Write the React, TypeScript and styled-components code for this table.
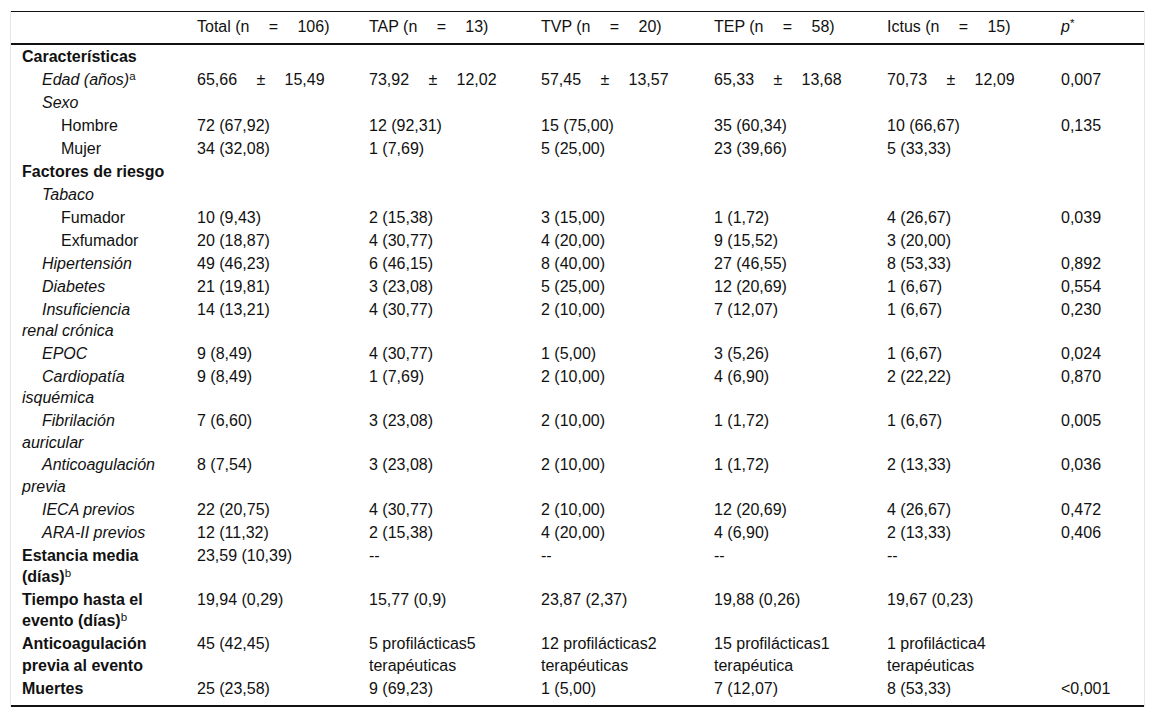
import React from 'react';
import styled, { createGlobalStyle } from 'styled-components';

const GlobalStyle = createGlobalStyle`
  html, body {
    margin: 0;
    padding: 0;
    background: #fff;
  }
  body {
    font-family: 'Liberation Sans', Arial, sans-serif;
    color: #111;
  }
`;

const Frame = styled.div`
  margin: 11px 0 0 10px;
  width: 1133px;
  border-left: 1px solid #e6e6e6;
  border-right: 1px solid #e6e6e6;
`;

const Table = styled.table`
  width: 1133px;
  border-collapse: collapse;
  table-layout: fixed;
  font-size: 16px;
  line-height: 21.3px;
  border-top: 1px solid #111;
  border-bottom: 2px solid #111;
`;

const HeadCell = styled.th`
  text-align: left;
  font-weight: 400;
  padding: 4.35px 10px 5.35px;
  border-bottom: 2px solid #111;
  white-space: nowrap;
`;

const LabelCell = styled.td<{ $level: number; $bold?: boolean; $italic?: boolean; $last?: boolean }>`
  vertical-align: top;
  padding: 0.85px 20px ${({ $last }) => ($last ? '5.7px' : '0.85px')} 11px;
  text-indent: ${({ $level }) => ($level === 2 ? 39 : $level * 20)}px;
  font-weight: ${({ $bold }) => ($bold ? 700 : 400)};
  font-style: ${({ $italic }) => ($italic ? 'italic' : 'normal')};
`;

const DataCell = styled.td<{ $last?: boolean }>`
  vertical-align: top;
  padding: 0.85px 10px ${({ $last }) => ($last ? '5.7px' : '0.85px')};
`;

const Sep = styled.span`
  margin: 0 0.93em;
`;

const Sup = styled.sup`
  font-size: 0.72em;
  line-height: 0;
  vertical-align: baseline;
  position: relative;
  top: -0.45em;
  font-style: normal;
  font-weight: 400;
`;

const Em = styled.span`
  font-style: italic;
`;

type Row = {
  label: React.ReactNode;
  level: number;
  bold?: boolean;
  italic?: boolean;
  cells?: React.ReactNode[];
};

const pm = (a: string, b: string) => (
  <>
    {a} <Sep>±</Sep> {b}
  </>
);

const n = (label: string, v: string) => (
  <>
    {label} (n <Sep>=</Sep> {v})
  </>
);

const rows: Row[] = [
  { label: 'Características', level: 0, bold: true },
  {
    label: <>Edad (años)<Sup>a</Sup></>,
    level: 1,
    italic: true,
    cells: [pm('65,66', '15,49'), pm('73,92', '12,02'), pm('57,45', '13,57'), pm('65,33', '13,68'), pm('70,73', '12,09'), '0,007'],
  },
  { label: 'Sexo', level: 1, italic: true },
  { label: 'Hombre', level: 2, cells: ['72 (67,92)', '12 (92,31)', '15 (75,00)', '35 (60,34)', '10 (66,67)', '0,135'] },
  { label: 'Mujer', level: 2, cells: ['34 (32,08)', '1 (7,69)', '5 (25,00)', '23 (39,66)', '5 (33,33)', ''] },
  { label: 'Factores de riesgo', level: 0, bold: true },
  { label: 'Tabaco', level: 1, italic: true },
  { label: 'Fumador', level: 2, cells: ['10 (9,43)', '2 (15,38)', '3 (15,00)', '1 (1,72)', '4 (26,67)', '0,039'] },
  { label: 'Exfumador', level: 2, cells: ['20 (18,87)', '4 (30,77)', '4 (20,00)', '9 (15,52)', '3 (20,00)', ''] },
  { label: 'Hipertensión', level: 1, italic: true, cells: ['49 (46,23)', '6 (46,15)', '8 (40,00)', '27 (46,55)', '8 (53,33)', '0,892'] },
  { label: 'Diabetes', level: 1, italic: true, cells: ['21 (19,81)', '3 (23,08)', '5 (25,00)', '12 (20,69)', '1 (6,67)', '0,554'] },
  { label: 'Insuficiencia renal crónica', level: 1, italic: true, cells: ['14 (13,21)', '4 (30,77)', '2 (10,00)', '7 (12,07)', '1 (6,67)', '0,230'] },
  { label: 'EPOC', level: 1, italic: true, cells: ['9 (8,49)', '4 (30,77)', '1 (5,00)', '3 (5,26)', '1 (6,67)', '0,024'] },
  { label: 'Cardiopatía isquémica', level: 1, italic: true, cells: ['9 (8,49)', '1 (7,69)', '2 (10,00)', '4 (6,90)', '2 (22,22)', '0,870'] },
  { label: 'Fibrilación auricular', level: 1, italic: true, cells: ['7 (6,60)', '3 (23,08)', '2 (10,00)', '1 (1,72)', '1 (6,67)', '0,005'] },
  { label: 'Anticoagulación previa', level: 1, italic: true, cells: ['8 (7,54)', '3 (23,08)', '2 (10,00)', '1 (1,72)', '2 (13,33)', '0,036'] },
  { label: 'IECA previos', level: 1, italic: true, cells: ['22 (20,75)', '4 (30,77)', '2 (10,00)', '12 (20,69)', '4 (26,67)', '0,472'] },
  { label: 'ARA-II previos', level: 1, italic: true, cells: ['12 (11,32)', '2 (15,38)', '4 (20,00)', '4 (6,90)', '2 (13,33)', '0,406'] },
  {
    label: <>Estancia media (días)<Sup>b</Sup></>,
    level: 0,
    bold: true,
    cells: ['23,59 (10,39)', '--', '--', '--', '--', ''],
  },
  {
    label: <>Tiempo hasta el evento (días)<Sup>b</Sup></>,
    level: 0,
    bold: true,
    cells: ['19,94 (0,29)', '15,77 (0,9)', '23,87 (2,37)', '19,88 (0,26)', '19,67 (0,23)', ''],
  },
  {
    label: 'Anticoagulación previa al evento',
    level: 0,
    bold: true,
    cells: [
      '45 (42,45)',
      '5 profilácticas5 terapéuticas',
      '12 profilácticas2 terapéuticas',
      '15 profilácticas1 terapéutica',
      '1 profiláctica4 terapéuticas',
      '',
    ],
  },
  { label: 'Muertes', level: 0, bold: true, cells: ['25 (23,58)', '9 (69,23)', '1 (5,00)', '7 (12,07)', '8 (53,33)', '<0,001'] },
];

const colWidths = [176, 172, 172, 173, 173, 174, 93];

const App: React.FC = () => {
  return (
    <>
      <GlobalStyle />
      <Frame>
        <Table>
          <colgroup>
            {colWidths.map((w, i) => (
              <col key={i} style={{ width: w }} />
            ))}
          </colgroup>
          <thead>
            <tr>
              <HeadCell />
              <HeadCell>{n('Total', '106')}</HeadCell>
              <HeadCell>{n('TAP', '13')}</HeadCell>
              <HeadCell>{n('TVP', '20')}</HeadCell>
              <HeadCell>{n('TEP', '58')}</HeadCell>
              <HeadCell>{n('Ictus', '15')}</HeadCell>
              <HeadCell>
                <Em>p</Em>
                <Sup>*</Sup>
              </HeadCell>
            </tr>
          </thead>
          <tbody>
            {rows.map((row, i) => {
              const last = i === rows.length - 1;
              const cells = row.cells ?? ['', '', '', '', '', ''];
              return (
                <tr key={i}>
                  <LabelCell $level={row.level} $bold={row.bold} $italic={row.italic} $last={last}>
                    {row.label}
                  </LabelCell>
                  {cells.map((c, j) => (
                    <DataCell key={j} $last={last}>
                      {c}
                    </DataCell>
                  ))}
                </tr>
              );
            })}
          </tbody>
        </Table>
      </Frame>
    </>
  );
};

export default App;
